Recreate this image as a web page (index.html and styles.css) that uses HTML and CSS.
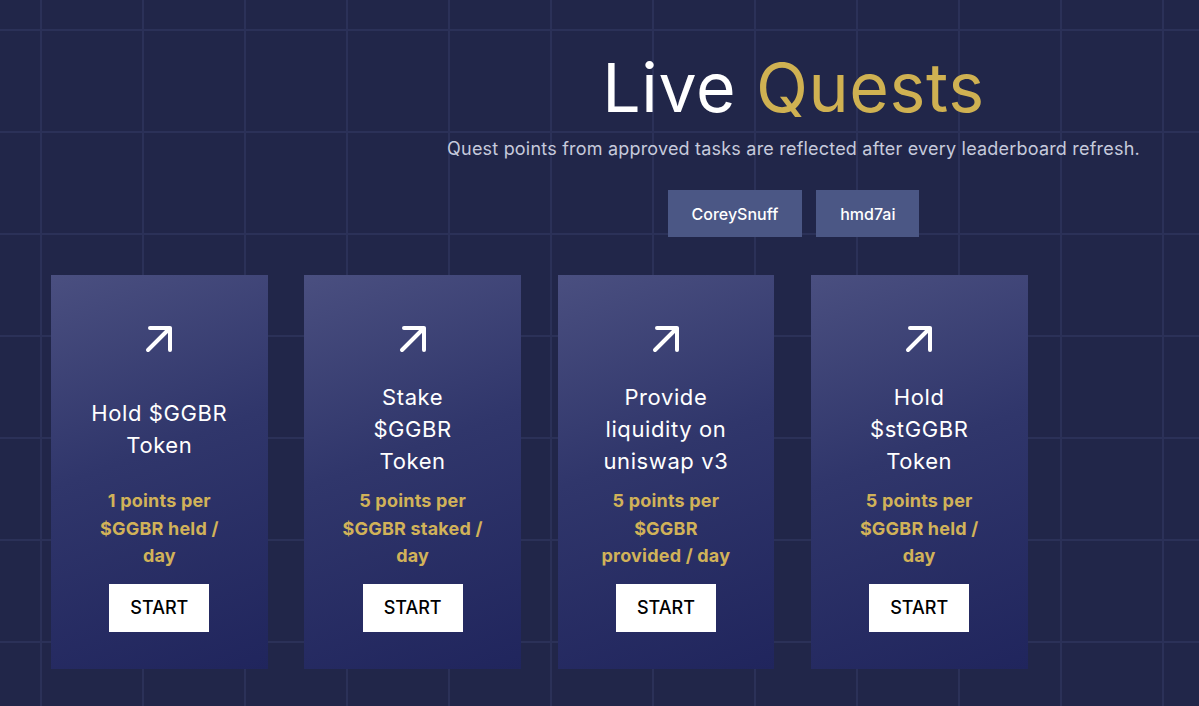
FILE: index.html
```html
<!DOCTYPE html>
<html lang="en">
<head>
<meta charset="utf-8">
<title>Live Quests</title>
<link rel="stylesheet" href="styles.css">
</head>
<body>
<main class="page">
  <header class="hero">
    <h1 class="hero-title">Live <span class="gold">Quests</span></h1>
    <p class="hero-sub">Quest points from approved tasks are reflected after every leaderboard refresh.</p>
    <div class="chips">
      <span class="chip">CoreySnuff</span>
      <span class="chip">hmd7ai</span>
    </div>
  </header>
  <section class="cards">
    <article class="card">
      <svg class="card-icon" viewBox="0 0 30 30" width="30" height="30"><path d="M6 4H26V26M4 26L26 4" fill="none" stroke="#fff" stroke-width="4" stroke-linecap="round" stroke-linejoin="round"/></svg>
      <div class="card-title">Hold $GGBR Token</div>
      <div class="card-points">1 points per $GGBR held / day</div>
      <button class="card-btn">START</button>
    </article>
    <article class="card">
      <svg class="card-icon" viewBox="0 0 30 30" width="30" height="30"><path d="M6 4H26V26M4 26L26 4" fill="none" stroke="#fff" stroke-width="4" stroke-linecap="round" stroke-linejoin="round"/></svg>
      <div class="card-title">Stake $GGBR Token</div>
      <div class="card-points">5 points per $GGBR staked / day</div>
      <button class="card-btn">START</button>
    </article>
    <article class="card">
      <svg class="card-icon" viewBox="0 0 30 30" width="30" height="30"><path d="M6 4H26V26M4 26L26 4" fill="none" stroke="#fff" stroke-width="4" stroke-linecap="round" stroke-linejoin="round"/></svg>
      <div class="card-title">Provide liquidity on uniswap v3</div>
      <div class="card-points">5 points per $GGBR provided / day</div>
      <button class="card-btn">START</button>
    </article>
    <article class="card">
      <svg class="card-icon" viewBox="0 0 30 30" width="30" height="30"><path d="M6 4H26V26M4 26L26 4" fill="none" stroke="#fff" stroke-width="4" stroke-linecap="round" stroke-linejoin="round"/></svg>
      <div class="card-title">Hold $stGGBR Token</div>
      <div class="card-points">5 points per $GGBR held / day</div>
      <button class="card-btn">START</button>
    </article>
  </section>
</main>
</body>
</html>
```
FILE: styles.css
```css
* { box-sizing: border-box; }
html, body { margin: 0; padding: 0; }
body {
  width: 1199px;
  height: 706px;
  overflow: hidden;
  font-family: Inter, "Noto Sans", sans-serif;
  background-color: #212649;
  background-image:
    linear-gradient(to right, #2b3158 2px, transparent 2px),
    linear-gradient(to bottom, #2b3158 2px, transparent 2px);
  background-size: 102px 102px;
  background-position: 40px 29px;
  color: #fff;
}
.page { display: flex; flex-direction: column; }
.hero {
  padding: 47px 0 0 388px;
  display: flex;
  flex-direction: column;
  align-items: center;
  text-align: center;
}
.hero-title {
  margin: 0;
  font-size: 68px;
  line-height: 80px;
  font-weight: 400;
  color: #fff;
  letter-spacing: 0.6px;
}
.gold { color: #cfb152; }
.hero-sub {
  margin: 9px 0 0;
  font-size: 18px;
  line-height: 25px;
  letter-spacing: 0.2px;
  color: #c6cadc;
}
.chips {
  display: flex;
  gap: 14px;
  margin-top: 29px;
}
.chip {
  display: flex;
  align-items: center;
  justify-content: center;
  height: 47px;
  padding: 0 24px;
  background: #4b5785;
  font-size: 16px;
  font-weight: 500;
  color: #fff;
}
.cards {
  display: flex;
  gap: 36.6px;
  padding-left: 51px;
  margin-top: 38px;
}
.card {
  width: 216.7px;
  height: 394px;
  padding: 49px 37px 0;
  display: flex;
  flex-direction: column;
  align-items: center;
  text-align: center;
  background: linear-gradient(160deg, #4a4f80 0%, #30366b 45%, #20255d 100%);
}
.card-icon { display: block; width: 30px; height: 30px; }
.card-title {
  margin-top: 27px;
  height: 96px;
  display: flex;
  align-items: center;
  justify-content: center;
  font-size: 22px;
  line-height: 32px;
  letter-spacing: 0.6px;
  font-weight: 400;
  color: #fff;
}
.card-points {
  margin-top: 10px;
  font-size: 18px;
  line-height: 27.5px;
  letter-spacing: 0.2px;
  font-weight: 700;
  color: #d1b259;
}
.card-btn {
  margin-top: 14px;
  width: 100px;
  height: 48px;
  border: 0;
  border-radius: 0;
  background: #fff;
  color: #000;
  font-family: Inter, "Noto Sans", sans-serif;
  font-size: 18px;
  font-weight: 500;
  padding: 0;
  cursor: pointer;
}
```
